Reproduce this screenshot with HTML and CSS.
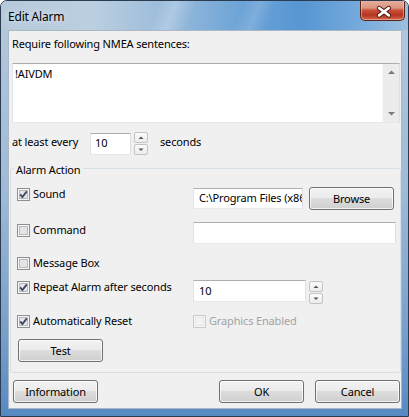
FILE: index.html
```html
<!DOCTYPE html>
<html>
<head>
<meta charset="utf-8">
<title>Edit Alarm</title>
<link rel="stylesheet" href="styles.css">
</head>
<body>
<div class="window">
  <div class="titlebar">
    <span class="title">Edit Alarm</span>
    <div class="close">
      <svg width="45" height="21" viewBox="0 0 45 21">
        <path d="M19.5 8 L29.5 15.5 M29.5 8 L19.5 15.5" stroke="#4a1c14" stroke-width="4.6" stroke-linecap="round" fill="none"/>
        <path d="M19.5 8 L29.5 15.5 M29.5 8 L19.5 15.5" stroke="#ffffff" stroke-width="2.6" stroke-linecap="round" fill="none"/>
      </svg>
    </div>
  </div>
  <div class="client">
    <div class="req">Require following NMEA sentences:</div>
    <div class="textarea">
      <div class="ta-text">!AIVDM</div>
      <div class="vscroll">
        <div class="sb-btn"><svg width="15" height="17" viewBox="0 0 15 17"><polygon points="4,10 7.5,6.5 11,10" fill="#7a7a7a"/></svg></div>
        <div class="sb-btn"><svg width="15" height="17" viewBox="0 0 15 17"><polygon points="4,7 7.5,10.5 11,7" fill="#7a7a7a"/></svg></div>
      </div>
    </div>
    <div class="every">
      <span class="every-label">at least every</span>
      <div class="field num">10</div>
      <div class="spin">
        <div class="spin-btn"><svg width="12" height="9" viewBox="0 0 12 9"><polygon points="3.5,6 6,3.5 8.5,6" fill="#555"/></svg></div>
        <div class="spin-btn"><svg width="12" height="9" viewBox="0 0 12 9"><polygon points="3.5,3.5 6,6 8.5,3.5" fill="#555"/></svg></div>
      </div>
      <span class="every-unit">seconds</span>
    </div>

    <div class="group">
      <div class="group-head"><span class="group-title">Alarm Action</span></div>

      <div class="row row-sound">
        <div class="cb-cell">
          <svg class="cb" width="13" height="13" viewBox="0 0 13 13"><rect x="0.5" y="0.5" width="12" height="12" fill="#f6f6f6" stroke="#8e8f8f"/><rect x="2.5" y="2.5" width="8" height="8" fill="#e2e4e7" stroke="#b7bbc0"/><path d="M3.2 6.4 L5.4 9 L9.8 3.4" fill="none" stroke="#3c4860" stroke-width="1.8"/></svg>
          <span>Sound</span>
        </div>
        <div class="field path"><span class="path-text">C:\Program Files (x86)\OpenCPN\sounds\beep_ssl.wav</span></div>
        <div class="btn browse">Browse</div>
      </div>

      <div class="row row-command">
        <div class="cb-cell">
          <svg class="cb" width="13" height="13" viewBox="0 0 13 13"><rect x="0.5" y="0.5" width="12" height="12" fill="#f6f6f6" stroke="#8e8f8f"/><rect x="2.5" y="2.5" width="8" height="8" fill="#e2e4e7" stroke="#b7bbc0"/></svg>
          <span>Command</span>
        </div>
        <div class="field cmd"></div>
      </div>

      <div class="row row-message">
        <div class="cb-cell">
          <svg class="cb" width="13" height="13" viewBox="0 0 13 13"><rect x="0.5" y="0.5" width="12" height="12" fill="#f6f6f6" stroke="#8e8f8f"/><rect x="2.5" y="2.5" width="8" height="8" fill="#e2e4e7" stroke="#b7bbc0"/></svg>
          <span>Message Box</span>
        </div>
      </div>

      <div class="row row-repeat">
        <div class="cb-cell">
          <svg class="cb" width="13" height="13" viewBox="0 0 13 13"><rect x="0.5" y="0.5" width="12" height="12" fill="#f6f6f6" stroke="#8e8f8f"/><rect x="2.5" y="2.5" width="8" height="8" fill="#e2e4e7" stroke="#b7bbc0"/><path d="M3.2 6.4 L5.4 9 L9.8 3.4" fill="none" stroke="#3c4860" stroke-width="1.8"/></svg>
          <span>Repeat Alarm after seconds</span>
        </div>
        <div class="field rep">10</div>
        <div class="spin spin-rep">
          <div class="spin-btn"><svg width="12" height="9" viewBox="0 0 12 9"><polygon points="3.5,6 6,3.5 8.5,6" fill="#555"/></svg></div>
          <div class="spin-btn"><svg width="12" height="9" viewBox="0 0 12 9"><polygon points="3.5,3.5 6,6 8.5,3.5" fill="#555"/></svg></div>
        </div>
      </div>

      <div class="row row-auto">
        <div class="cb-cell">
          <svg class="cb" width="13" height="13" viewBox="0 0 13 13"><rect x="0.5" y="0.5" width="12" height="12" fill="#f6f6f6" stroke="#8e8f8f"/><rect x="2.5" y="2.5" width="8" height="8" fill="#e2e4e7" stroke="#b7bbc0"/><path d="M3.2 6.4 L5.4 9 L9.8 3.4" fill="none" stroke="#3c4860" stroke-width="1.8"/></svg>
          <span>Automatically Reset</span>
        </div>
        <div class="cb-cell disabled">
          <svg class="cb" width="13" height="13" viewBox="0 0 13 13"><rect x="0.5" y="0.5" width="12" height="12" fill="#f7f7f7" stroke="#cbcbcb"/><rect x="2.5" y="2.5" width="8" height="8" fill="#f4f4f4" stroke="#e6e6e6"/></svg>
          <span>Graphics Enabled</span>
        </div>
      </div>

      <div class="btn test">Test</div>
    </div>

    <div class="footer">
      <div class="btn">Information</div>
      <div class="btn ok">OK</div>
      <div class="btn cancel">Cancel</div>
    </div>
  </div>
</div>
</body>
</html>
```

FILE: styles.css
```css
* { box-sizing: border-box; }
html, body { margin: 0; padding: 0; }
body {
  width: 409px;
  height: 417px;
  overflow: hidden;
  font-family: "Noto Sans", "Open Sans", "DejaVu Sans", sans-serif;
  font-size: 11px;
  letter-spacing: -0.15px;
  color: #000;
  background: #ffffff;
}

.window {
  width: 409px;
  height: 417px;
  border: 1px solid #2b3c51;
  border-radius: 7px 7px 0 0;
  padding: 0 6px 7px 7px;
  display: flex;
  flex-direction: column;
  background: linear-gradient(to bottom, #b4c9dd 0%, #9fbbd7 45%, #779fcc 80%, #5689c2 100%);
  overflow: hidden;
}

.titlebar {
  height: 29px;
  margin: 0 -6px 0 -7px;
  display: flex;
  justify-content: space-between;
  align-items: flex-start;
  background:
    linear-gradient(112deg, rgba(255,255,255,0) 38%, rgba(255,255,255,0.22) 42%, rgba(255,255,255,0) 47%, rgba(255,255,255,0) 58%, rgba(255,255,255,0.15) 62%, rgba(255,255,255,0) 66%),
    linear-gradient(to right, #b6c9db 0%, #bccfe0 22%, #98badb 42%, #6aa2d6 60%, #5796d3 74%, #75aadb 88%, #9dc0e0 100%);
}
.title {
  margin: 8px 0 0 7px;
  line-height: 16px;
  font-size: 12px;
  letter-spacing: -0.2px;
  color: #000;
  text-shadow: 0 0 6px rgba(255,255,255,0.9);
}
.close {
  width: 45px;
  height: 21px;
  margin: -1px 3px 0 0;
  border: 1px solid #5c2419;
  border-top: none;
  border-radius: 0 0 5px 5px;
  background: linear-gradient(to bottom, #e7b2a4 0%, #dc9480 40%, #c9543b 50%, #b7341f 75%, #d26a4d 100%);
  box-shadow: inset 0 0 0 1px rgba(255,220,210,0.45);
  display: flex;
  overflow: hidden;
}
.close svg { display: block; margin-left: -1px; }

.client {
  flex: 1;
  background: #f0f0f0;
  border: 1px solid #aab8c6;
  display: flex;
  flex-direction: column;
  align-items: flex-start;
}

.req {
  margin: 5px 0 0 3px;
  line-height: 16px;
}

.textarea {
  margin: 11px 0 0 3px;
  width: 388px;
  height: 60px;
  display: flex;
  background: #fff;
  border: 1px solid;
  border-color: #abadb3 #dbdfe6 #e3e9ef #e2e3ea;
}
.ta-text {
  flex: 1;
  padding: 2px 0 0 2px;
  line-height: 16px;
}
.vscroll {
  width: 17px;
  display: flex;
  flex-direction: column;
  justify-content: space-between;
  background: #ececec;
  border-left: 1px solid #f6f6f6;
}
.sb-btn { height: 17px; }
.sb-btn svg { display: block; margin-left: 1px; }

.field {
  background: #fff;
  border: 1px solid;
  border-color: #abadb3 #dbdfe6 #e3e9ef #e2e3ea;
  line-height: 16px;
  white-space: nowrap;
  overflow: hidden;
}

.every {
  margin: 9px 0 0 3px;
  height: 23px;
  display: flex;
  align-items: flex-start;
}
.every-label {
  width: 78px;
  line-height: 16px;
  margin-top: 2px;
}
.every .num {
  width: 41px;
  height: 22px;
  margin-top: 1px;
  padding: 1px 0 0 4px;
}
.spin {
  margin-left: 3px;
  width: 14px;
  height: 23px;
  display: flex;
  flex-direction: column;
  gap: 1px;
}
.spin-btn {
  flex: 1;
  border: 1px solid #c3c3c3;
  border-radius: 2px;
  background: linear-gradient(to bottom, #fbfbfb, #ececec);
  display: flex;
  align-items: center;
  justify-content: center;
}
.spin-btn svg { display: block; }
.every-unit {
  margin-left: 12px;
  margin-top: 2px;
  line-height: 16px;
}

.group {
  margin: 13px 0 0 1px;
  width: 391px;
  border: 1px solid #d5dfe5;
  border-radius: 3px;
  padding: 0 0 10px 6px;
  display: flex;
  flex-direction: column;
  align-items: flex-start;
}
.group-head {
  margin: -7px 0 0 -3px;
  height: 16px;
  line-height: 16px;
}
.group-title {
  background: #f0f0f0;
  padding: 0 2px;
}

.row {
  display: flex;
  align-items: flex-start;
}
.cb-cell {
  width: 176px;
  height: 16px;
  line-height: 16px;
  display: flex;
  align-items: center;
  gap: 3px;
  white-space: nowrap;
}
.cb { display: block; flex: none; }
.cb-cell.disabled { color: #a3a3a3; width: auto; }

.row-sound { margin-top: 8px; }
.path {
  width: 110px;
  height: 21px;
  margin-top: 2px;
  padding: 1px 0 0 5px;
}
.path-text { display: block; width: 103px; overflow: hidden; }
.btn {
  width: 85px;
  height: 23px;
  border: 1px solid #707070;
  border-radius: 3px;
  background: linear-gradient(to bottom, #f2f2f2 0%, #ebebeb 49%, #dddddd 50%, #cfcfcf 100%);
  box-shadow: inset 0 0 0 1px rgba(255,255,255,0.75);
  display: flex;
  align-items: center;
  justify-content: center;
  line-height: 16px;
}
.browse { margin: 1px 0 0 6px; }

.row-command { margin-top: 12px; }
.cmd { width: 203px; height: 22px; }

.row-message { margin-top: 11px; }

.row-repeat { margin-top: 8px; }
.rep {
  width: 113px;
  height: 22px;
  margin-top: 1px;
  padding: 2px 0 0 5px;
}
.spin-rep { height: 21px; margin-top: 2px; }

.row-auto { margin-top: 11px; }

.test { margin: 10px 0 0 1px; }

.footer {
  margin-top: 7px;
  width: 100%;
  display: flex;
  padding: 0 1px 0 4px;
}
.ok { margin-left: auto; }
.cancel { margin-left: 11px; }
```
